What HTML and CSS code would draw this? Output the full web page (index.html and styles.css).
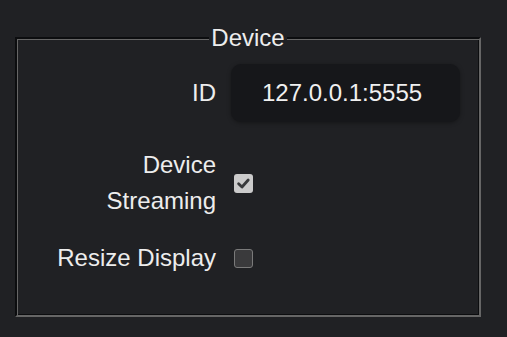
FILE: index.html
```html
<!DOCTYPE html>
<html>
<head>
<meta charset="utf-8">
<link rel="stylesheet" href="styles.css">
</head>
<body>
<fieldset class="panel">
  <legend class="panel-title">Device</legend>
  <div class="row row-id">
    <label class="label">ID</label>
    <div class="text-input">127.0.0.1:5555</div>
  </div>
  <div class="row row-stream">
    <label class="label label-wrap">Device Streaming</label>
    <span class="checkbox checked">
      <svg viewBox="0 0 19 19" width="19" height="19"><path d="M4.6 9.8 L8 13 L14.2 6" fill="none" stroke="#38393b" stroke-width="2.8" stroke-linecap="round" stroke-linejoin="round"/></svg>
    </span>
  </div>
  <div class="row row-resize">
    <label class="label">Resize Display</label>
    <span class="checkbox"></span>
  </div>
</fieldset>
</body>
</html>
```
FILE: styles.css
```css
html, body {
  margin: 0;
  padding: 0;
  background: #202124;
}
body {
  font-family: "Liberation Sans", Arial, sans-serif;
  font-size: 24px;
  line-height: 36px;
  color: #ededed;
  height: 337px;
  overflow: hidden;
}
.panel {
  box-sizing: border-box;
  width: 466px;
  margin: 20px 0 0 15px;
  padding: 8px 0 39px 0;
  border-style: solid;
  border-width: 2px;
  border-color: #0c0d0f #666 #666 #0c0d0f;
  box-shadow: inset 1px 1px 0 #666, inset -1px -1px 0 #0c0d0f;
  min-inline-size: 0;
}
.panel-title {
  margin: 0 auto;
  padding: 0 2px;
  line-height: 36px;
  background: #202124;
}
.row {
  display: grid;
  grid-template-columns: 199px auto;
  column-gap: 15px;
  align-items: center;
  justify-content: start;
}
.row-stream { margin-top: 25px; }
.row-resize { margin-top: 21px; }
.label {
  justify-self: end;
  text-align: right;
}
.label-wrap {
  max-width: 175px;
}
.text-input {
  box-sizing: border-box;
  width: 229px;
  height: 58px;
  border-radius: 10px;
  background: #16171a;
  box-shadow: 0 1px 4px rgba(0,0,0,0.35);
  padding-left: 31px;
  display: flex;
  align-items: center;
  color: #f0f0f0;
}
.checkbox {
  box-sizing: border-box;
  display: block;
  width: 19px;
  height: 19px;
  margin-left: 3px;
  border-radius: 3px;
  border: 1.5px solid #7a7a7a;
  background: #3a3a3c;
}
.checkbox.checked {
  border: none;
  background: #cbcbcb;
}
.checkbox svg {
  display: block;
}
```
